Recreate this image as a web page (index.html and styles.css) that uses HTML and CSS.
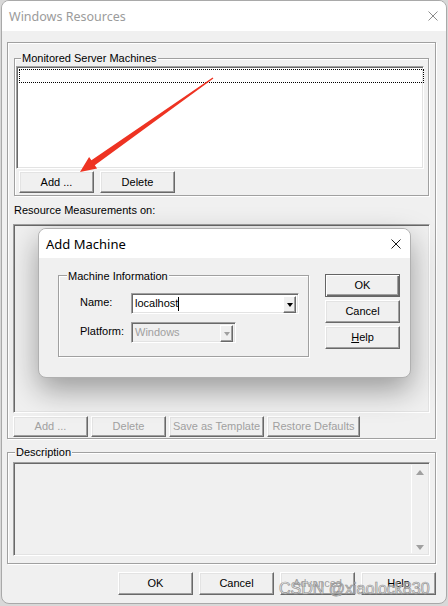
FILE: index.html
```html
<!DOCTYPE html>
<html lang="en">
<head>
<meta charset="utf-8">
<title>Windows Resources</title>
<link rel="stylesheet" href="styles.css">
</head>
<body>
<div class="win">
  <div class="titlebar">
    <span class="title">Windows Resources</span>
    <svg class="close" width="10" height="10" viewBox="0 0 10 10"><path d="M0.5 0.5L9.5 9.5M9.5 0.5L0.5 9.5" stroke="#8c8c8c" stroke-width="1" fill="none"/></svg>
  </div>
  <div class="client">
    <div class="panel etched">
      <div class="group etched grp-mon">
        <div class="glabel gl-mon">Monitored Server Machines</div>
        <div class="list sunken"><div class="focusrow"></div></div>
        <div class="btnrow row-mon">
          <div class="btn h22">Add ...</div>
          <div class="btn h22">Delete</div>
        </div>
      </div>
      <div class="res-label">Resource Measurements on:</div>
      <div class="biglist sunken"></div>
      <div class="btnrow row2">
        <div class="btn h21 dis w75">Add ...</div>
        <div class="btn h21 dis w75">Delete</div>
        <div class="btn h21 dis w95">Save as Template</div>
        <div class="btn h21 dis w93">Restore Defaults</div>
      </div>
    </div>
    <div class="group etched grp-desc">
      <div class="glabel gl-desc">Description</div>
      <div class="textarea sunken">
        <div class="sb">
          <span class="tri up"></span>
          <span class="tri down"></span>
        </div>
      </div>
    </div>
    <div class="btnrow row-bottom">
      <div class="btn h23">OK</div>
      <div class="btn h23">Cancel</div>
      <div class="btn h23 dis">Advanced</div>
      <div class="btn h23">Help</div>
    </div>
  </div>

  <div class="dialog">
    <div class="dtitle">
      <span>Add Machine</span>
      <svg width="10" height="10" viewBox="0 0 10 10"><path d="M0.5 0.5L9.5 9.5M9.5 0.5L0.5 9.5" stroke="#1a1a1a" stroke-width="1" fill="none"/></svg>
    </div>
    <div class="dbody">
      <div class="group etched grp-mi">
        <div class="glabel gl-mi">Machine Information</div>
        <div class="frow frow-name">
          <span class="flabel">Name:</span>
          <div class="combo sunken cb-name">
            <span class="ctext">localhost<span class="caret"></span></span>
            <span class="ddbtn"><span class="dtri"></span></span>
          </div>
        </div>
        <div class="frow frow-plat">
          <span class="flabel">Platform:</span>
          <div class="combo sunken cb-plat dis">
            <span class="ctext">Windows</span>
            <span class="ddbtn"><span class="dtri"></span></span>
          </div>
        </div>
      </div>
      <div class="dbtns">
        <div class="btn h23 default">OK</div>
        <div class="btn h23">Cancel</div>
        <div class="btn h23"><span><u>H</u>elp</span></div>
      </div>
    </div>
  </div>

  <svg class="arrow" width="448" height="606" viewBox="0 0 448 606">
    <polygon points="212.6,77.5 213.4,78.5 94.8,165.3 97.1,168.5 80,172 89.1,157.1 91.4,160.3" fill="#ee3322"/>
  </svg>

  <div class="watermark">CSDN @xiaolock830</div>
</div>
</body>
</html>
```

FILE: styles.css
```css
* { box-sizing: border-box; }
html, body { margin: 0; padding: 0; }
body {
  width: 448px;
  height: 606px;
  overflow: hidden;
  background: #d8d8d8;
  font-family: "Liberation Sans", Arial, sans-serif;
  font-size: 11px;
  color: #000;
}

.win {
  position: relative;
  margin-left: 1px;
  width: 446px;
  height: 604px;
  border: 1px solid #a9a9a9;
  border-radius: 8px;
  background: #f0f0f0;
}

.titlebar {
  height: 30px;
  background: #fff;
  border-radius: 7px 7px 0 0;
  display: flex;
  align-items: center;
  justify-content: space-between;
  padding: 0 8px 0 7px;
}
.title {
  font-family: "Noto Sans", sans-serif;
  font-size: 12.5px;
  color: #9b9b9b;
}
.close { display: block; }

.client { padding: 11px 0 0 5px; }

.etched {
  border: 1px solid #a0a0a0;
  box-shadow: 1px 1px 0 #fff, inset 1px 1px 0 #fff;
}
.sunken {
  border: 1px solid;
  border-color: #a0a0a0 #fff #fff #a0a0a0;
  box-shadow: inset 1px 1px 0 #696969, inset -1px -1px 0 #e3e3e3;
}

.btn {
  display: flex;
  align-items: center;
  justify-content: center;
  width: 75px;
  border: 1px solid;
  border-color: #fff #696969 #696969 #fff;
  box-shadow: inset -1px -1px 0 #a0a0a0, inset 1px 1px 0 #e3e3e3;
  background: #f0f0f0;
  line-height: 13px;
  white-space: nowrap;
}
.btn.dis { color: #a0a0a0; }
.btn.default {
  border: 1px solid #646464;
  box-shadow: inset 1px 1px 0 #fff, inset -1px -1px 0 #696969, inset -2px -2px 0 #a0a0a0;
}
.h21 { height: 21px; }
.h22 { height: 22px; }
.h23 { height: 23px; }
.w75 { width: 75px; }
.w95 { width: 95px; }
.w93 { width: 93px; }

.btnrow { display: flex; }

.glabel {
  width: fit-content;
  padding: 0 1px;
  background: #f0f0f0;
  line-height: 13px;
  white-space: nowrap;
}

/* Main panel */
.panel {
  width: 429px;
  padding: 0 0 1px 5px;
}
.grp-mon {
  margin: 15px 0 0 1px;
  width: 415px;
  padding: 0 0 2px 1px;
}
.gl-mon { margin: -7px 0 0 5px; }
.list {
  margin-top: 1px;
  width: 408px;
  height: 103px;
  background: #fff;
  padding: 2px;
}
.focusrow {
  width: 405px;
  height: 14px;
  border: 1px dotted #000;
}
.row-mon { margin: 2px 0 0 3px; gap: 6px; }

.res-label {
  margin: 8px 0 0 1px;
  line-height: 13px;
}
.biglist {
  margin-top: 7px;
  width: 417px;
  height: 189px;
  background: #f0f0f0;
}
.row2 { margin-top: 3px; gap: 3px; }

/* Description */
.grp-desc {
  margin-top: 13px;
  width: 429px;
  padding: 0 5px 7px;
}
.gl-desc { margin: -7px 0 0 2px; }
.textarea {
  margin-top: 3px;
  width: 417px;
  height: 94px;
  background: #f0f0f0;
  padding: 2px;
  display: flex;
  justify-content: flex-end;
}
.sb {
  width: 16px;
  height: 100%;
  border-left: 1px solid #fff;
  display: flex;
  flex-direction: column;
  justify-content: space-between;
  align-items: center;
  padding: 5px 0 3px;
}
.tri {
  width: 0;
  height: 0;
  border-left: 4px solid transparent;
  border-right: 4px solid transparent;
}
.tri.up { border-bottom: 5px solid #a0a0a0; }
.tri.down { border-top: 5px solid #a0a0a0; }

.row-bottom {
  margin-top: 8px;
  width: 429px;
  justify-content: flex-end;
  gap: 6px;
}

/* Add Machine dialog (overlay) */
.dialog {
  position: absolute;
  left: 36px;
  top: 227px;
  width: 373px;
  height: 150px;
  border: 1px solid #b0b0b0;
  border-radius: 8px;
  background: #f0f0f0;
  box-shadow: 0 12px 30px rgba(0, 0, 0, 0.36);
}
.dtitle {
  height: 29px;
  background: #fff;
  border-radius: 7px 7px 0 0;
  display: flex;
  align-items: center;
  justify-content: space-between;
  padding: 0 9px 0 7px;
  font-family: "Noto Sans", sans-serif;
  font-size: 13px;
  color: #000;
}
.dtitle svg { display: block; }
.dbody {
  display: flex;
  align-items: flex-start;
  padding-left: 19px;
}
.grp-mi {
  margin-top: 17px;
  width: 251px;
  padding: 0 0 13px 0;
}
.gl-mi { margin: -6px 0 0 8px; }
.frow {
  display: flex;
  align-items: flex-start;
  margin-left: 21px;
}
.frow-name { margin-top: 10px; }
.frow-plat { margin-top: 8px; }
.flabel {
  width: 51px;
  padding-top: 3px;
  line-height: 13px;
}
.combo {
  display: flex;
  height: 21px;
  padding: 2px;
  background: #fff;
}
.cb-name { width: 168px; }
.cb-plat { width: 105px; background: #f0f0f0; }
.ctext {
  flex: 1;
  display: flex;
  align-items: center;
  padding-left: 1px;
  line-height: 17px;
}
.cb-plat .ctext { color: #a0a0a0; }
.caret {
  display: inline-block;
  width: 1px;
  height: 14px;
  background: #000;
}
.ddbtn {
  width: 13px;
  height: 17px;
  display: flex;
  align-items: center;
  justify-content: center;
  border: 1px solid;
  border-color: #fff #696969 #696969 #fff;
  box-shadow: inset -1px -1px 0 #a0a0a0;
  background: #f0f0f0;
}
.dtri {
  width: 0;
  height: 0;
  border-left: 3.5px solid transparent;
  border-right: 3.5px solid transparent;
  border-top: 4px solid #000;
}
.cb-plat .dtri { border-top-color: #a0a0a0; }
.dbtns {
  margin: 16px 0 0 16px;
  display: flex;
  flex-direction: column;
  gap: 3px;
}

/* annotation overlays */
.arrow {
  position: absolute;
  left: -2px;
  top: -1px;
  pointer-events: none;
}
.watermark {
  position: absolute;
  left: 277px;
  top: 578px;
  font-family: "Liberation Sans", Arial, sans-serif;
  font-size: 16px;
  line-height: 20px;
  color: rgba(255, 255, 255, 0.55);
  -webkit-text-stroke: 0.7px #8e8e8e;
  white-space: nowrap;
}
```
